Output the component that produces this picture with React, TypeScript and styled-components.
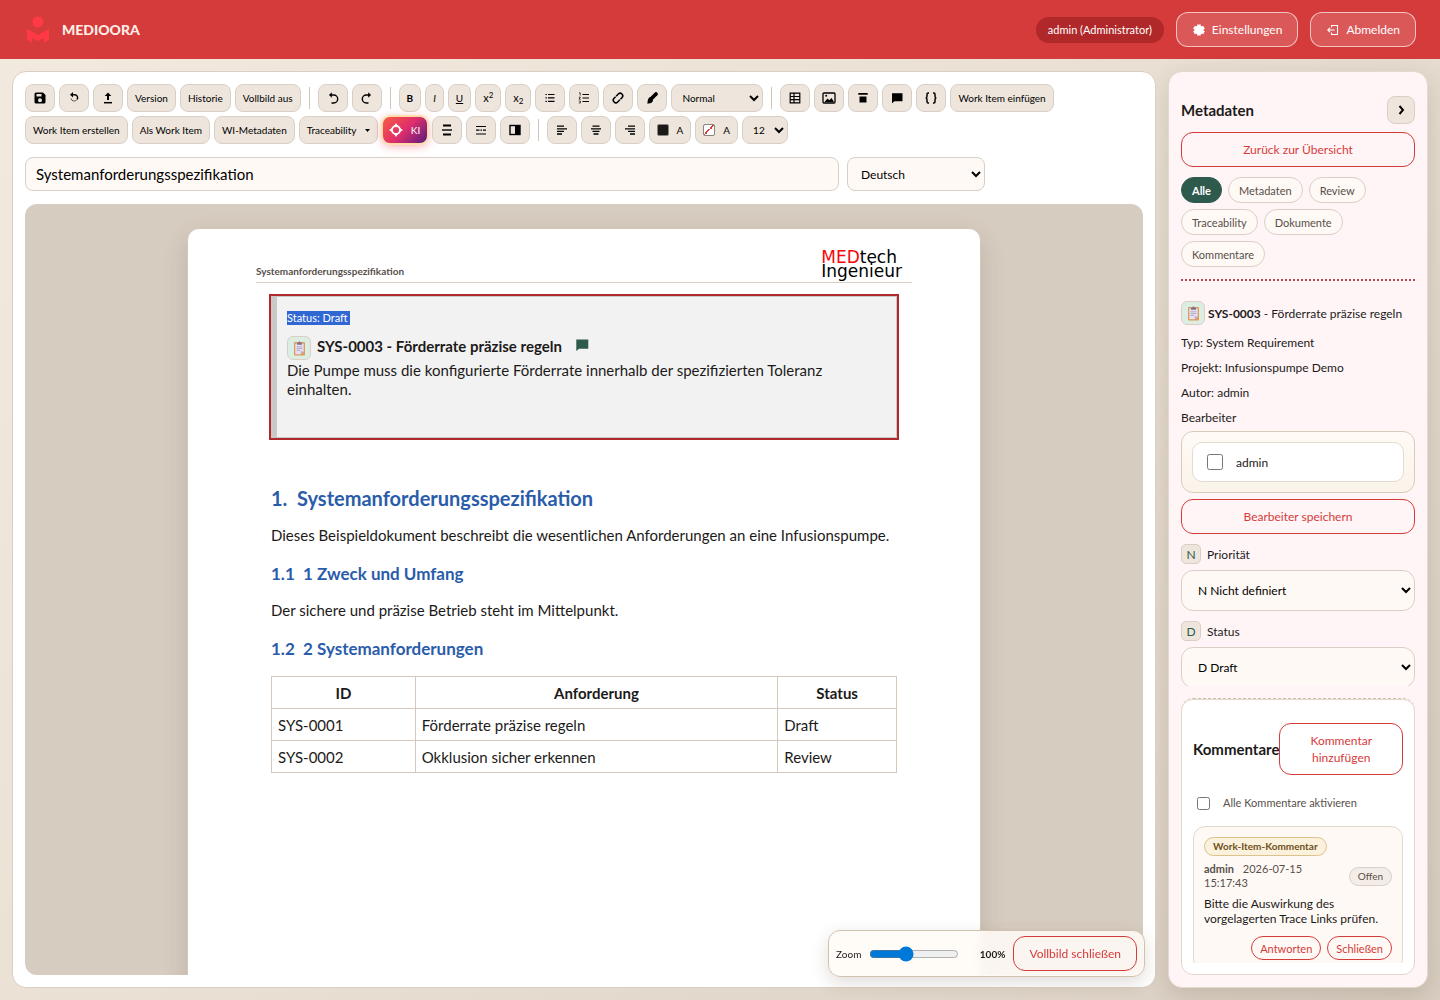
import React from "react";
import styled, { createGlobalStyle, css } from "styled-components";

const c = {
  red: "#d53b3b",
  redDark: "#b02829",
  green: "#2d5a4c",
  sand: "#eee6dd",
  line: "#d9cfc6",
  cream: "#fff9f5",
  canvas: "#d7ccc0",
  ink: "#1c1a19",
  muted: "#57504b",
  blue: "#2a5caa",
};

const Global = createGlobalStyle`
  *, *::before, *::after { box-sizing: border-box; }
  body {
    margin: 0;
    font-family: Lato, "Open Sans", sans-serif;
    font-size: 12px;
    color: ${c.ink};
    background: #e5dbcf;
  }
  button, input, select { font: inherit; color: inherit; }
  h1, h2, h3, p { margin: 0; }
`;

const Shell = styled.div`
  display: flex;
  flex-direction: column;
  height: 100vh;
  background: linear-gradient(135deg, #f3eadf 0%, #e9dfd3 50%, #d8cec1 100%);
`;

const TopBar = styled.header`
  display: flex;
  align-items: center;
  justify-content: space-between;
  padding: 12px 24px;
  background: ${c.red};
  color: #fff;
`;

const Brand = styled.div`
  display: flex;
  align-items: center;
  gap: 10px;
  font-size: 14px;
  font-weight: 900;
  color: #fdeee6;
`;

const TopActions = styled.div`
  display: flex;
  align-items: center;
  gap: 12px;
`;

const UserPill = styled.span`
  padding: 0 12px;
  border-radius: 13px;
  background: ${c.redDark};
  font-size: 11px;
  line-height: 26px;
`;

const GhostButton = styled.button`
  display: flex;
  align-items: center;
  gap: 6px;
  height: 35px;
  padding: 0 15px;
  border: 1px solid rgba(255, 255, 255, 0.65);
  border-radius: 12px;
  background: rgba(255, 255, 255, 0.15);
  font-size: 12px;
`;

const Workspace = styled.main`
  flex: 1;
  min-height: 0;
  display: grid;
  grid-template-columns: minmax(0, 1fr) 260px;
  gap: 12px;
  padding: 12px;
`;

const Editor = styled.section`
  position: relative;
  display: flex;
  flex-direction: column;
  min-height: 0;
  padding: 12px;
  border: 1px solid ${c.line};
  border-radius: 14px;
  background: #fff;
`;

const Toolbar = styled.div`
  display: flex;
  flex-wrap: wrap;
  gap: 4px;
`;

const toolBase = css`
  height: 28px;
  border: 1px solid ${c.line};
  border-radius: 8px;
  background: ${c.sand};
  color: #000;
  font-size: 10px;
`;

const Tool = styled.button<{ $icon?: boolean }>`
  ${toolBase}
  display: flex;
  align-items: center;
  justify-content: center;
  gap: 8px;
  padding: 0 7px;
  ${(p) => p.$icon && "width: 30px; padding: 0;"}
`;

const AiTool = styled(Tool)`
  width: 46px;
  padding: 0;
  border-color: #ffd9a0;
  background: linear-gradient(135deg, #f9603f 0%, #e02d6c 50%, #4e1a80 100%);
  background-origin: border-box;
  color: #fff;
  box-shadow: 0 0 0 1px #ffdfae, 0 2px 10px rgba(240, 60, 70, 0.45);
`;

const ToolSelect = styled.select<{ $wide?: boolean }>`
  ${toolBase}
  width: ${(p) => (p.$wide ? 92 : 46)}px;
  padding: 0 0 0 6px;
`;

const Divider = styled.span`
  width: 1px;
  height: 22px;
  margin: 3px 4px;
  background: #cfc5ba;
`;

const Swatch = styled.span<{ $none?: boolean }>`
  width: 12px;
  height: 12px;
  border: 1px solid #8c847c;
  border-radius: 2px;
  background: ${(p) =>
    p.$none
      ? "linear-gradient(135deg, #fff 45%, #d53b3b 45%, #d53b3b 55%, #fff 55%)"
      : "#1c1a19"};
`;

const TitleRow = styled.div`
  display: flex;
  gap: 8px;
  max-width: 960px;
  margin: 13px 0;
`;

const fieldBase = css`
  border: 1px solid ${c.line};
  border-radius: 8px;
  background: ${c.cream};
  color: #000;
`;

const TitleInput = styled.input`
  ${fieldBase}
  flex: 1;
  min-width: 0;
  height: 34px;
  padding: 0 10px;
  font-size: 15px;
`;

const LangSelect = styled.select`
  ${fieldBase}
  width: 138px;
  height: 34px;
  padding: 0 0 0 9px;
  font-size: 12px;
`;

const Canvas = styled.div`
  flex: 1;
  min-height: 0;
  overflow: hidden;
  padding: 24px;
  border-radius: 12px;
  background: ${c.canvas};
`;

const Sheet = styled.article`
  width: 794px;
  max-width: 100%;
  min-height: 1123px;
  margin: 0 auto;
  padding: 21px 68px;
  border: 1px solid #d2c6b8;
  border-radius: 12px;
  background: #fff;
  box-shadow: 0 8px 24px rgba(70, 50, 30, 0.16);
`;

const SheetHead = styled.div`
  display: flex;
  align-items: flex-end;
  justify-content: space-between;
  height: 33px;
  padding: 0 10px 4px 0;
  border-bottom: 1px solid ${c.line};
  font-size: 10px;
  font-weight: 700;
  line-height: 14px;
  color: ${c.muted};
`;

const LogoText = styled.span`
  display: flex;
  flex-direction: column;
  font-family: "DejaVu Sans", sans-serif;
  font-size: 17px;
  font-weight: 400;
  line-height: 14px;
  color: #000;
  em {
    font-style: normal;
    color: #f80808;
  }
`;

const SheetBody = styled.div`
  padding: 13px 15px;
  font-size: 15px;
`;

const WorkItem = styled.section`
  padding: 14px 24px 38px 10px;
  border: 1px solid #c9c9c9;
  border-left-width: 6px;
  outline: 2px solid ${c.redDark};
  background: #f2f2f2;
`;

const Selected = styled.span`
  display: block;
  width: fit-content;
  padding-right: 2px;
  background: #3067d3;
  color: #fff;
  font-size: 11px;
  line-height: 14px;
`;

const WorkItemTitle = styled.div`
  display: flex;
  gap: 6px;
  margin-top: 11px;
  font-weight: 700;
  line-height: 20px;
  > svg {
    margin: 1px 0 0 6px;
  }
`;

const Tile = styled.span`
  display: inline-flex;
  align-items: center;
  justify-content: center;
  width: 24px;
  height: 24px;
  border: 1px solid ${c.line};
  border-radius: 6px;
  background: #dceee2;
`;

const WorkItemText = styled.p`
  margin-top: 1px;
  line-height: 19px;
`;

const H1 = styled.h1`
  margin-top: 48px;
  font-size: 20px;
  line-height: 24px;
  color: ${c.blue};
  white-space: pre-wrap;
`;

const H2 = styled.h2`
  margin-top: 18px;
  font-size: 17px;
  line-height: 22px;
  color: ${c.blue};
  white-space: pre-wrap;
`;

const Para = styled.p`
  margin-top: 15px;
  line-height: 20px;
`;

const DataTable = styled.table`
  width: 100%;
  margin-top: 16px;
  table-layout: fixed;
  border-collapse: collapse;
  th,
  td {
    height: 32px;
    padding: 0 6px;
    border: 1px solid #d6c8ba;
    text-align: left;
  }
  th {
    text-align: center;
  }
  th:first-child {
    width: 23%;
  }
  th:last-child {
    width: 19%;
  }
`;

const ZoomBar = styled.div`
  position: absolute;
  right: 10px;
  bottom: 10px;
  display: flex;
  align-items: center;
  gap: 8px;
  padding: 5px 7px;
  border: 1px solid #d2c1ae;
  border-radius: 12px;
  background: rgba(255, 250, 246, 0.88);
  backdrop-filter: blur(6px);
  box-shadow: 0 6px 18px rgba(70, 50, 30, 0.16);
  font-size: 10px;
  input {
    width: 90px;
    margin: 0;
    accent-color: #0078d7;
  }
  output {
    width: 38px;
    text-align: right;
    font-weight: 700;
  }
`;

const OutlineButton = styled.button<{ $size?: "small" | "tall" }>`
  height: 35px;
  padding: 0 15px;
  border: 1px solid ${c.red};
  border-radius: 12px;
  background: transparent;
  color: ${c.red};
  font-size: 12px;
  ${(p) =>
    p.$size === "small" &&
    "height: 24px; padding: 0 8px; font-size: 11px;"}
  ${(p) =>
    p.$size === "tall" &&
    "flex: 1; height: 52px; line-height: 17px;"}
`;

const Sidebar = styled.aside`
  display: flex;
  flex-direction: column;
  min-height: 0;
  padding: 12px;
  border: 1px solid #e3d9ce;
  border-radius: 14px;
  background: #fff5f6;
  box-shadow: 0 8px 24px rgba(70, 50, 30, 0.16);
`;

const SideHead = styled.div`
  display: flex;
  align-items: center;
  justify-content: space-between;
  margin: 12px 0 8px;
  h2 {
    font-size: 15px;
  }
`;

const CollapseButton = styled.button`
  ${toolBase}
  display: grid;
  place-items: center;
  width: 28px;
  padding: 0;
`;

const Chips = styled.div`
  display: flex;
  flex-wrap: wrap;
  gap: 6px;
  margin-top: 10px;
  padding-bottom: 12px;
  border-bottom: 2px dotted #b54b50;
`;

const Chip = styled.button<{ $active?: boolean }>`
  height: 26px;
  padding: 0 10px;
  border: 1px solid ${(p) => (p.$active ? c.green : c.line)};
  border-radius: 13px;
  background: ${(p) => (p.$active ? c.green : c.cream)};
  color: ${(p) => (p.$active ? "#fff" : c.muted)};
  font-size: 11px;
  font-weight: ${(p) => (p.$active ? 700 : 400)};
`;

const SideScroll = styled.div`
  flex: 1;
  min-height: 0;
  overflow: hidden;
  display: flex;
  flex-direction: column;
  padding-top: 20px;
  > * {
    flex-shrink: 0;
  }
`;

const ItemLine = styled.p`
  display: flex;
  align-items: center;
  gap: 3px;
  margin-bottom: 5px;
  font-size: 12px;
`;

const Fact = styled.p`
  font-size: 12px;
  line-height: 25px;
`;

const Assignees = styled.div`
  margin: 1px 0 6px;
  padding: 10px;
  border: 1px solid #d8ccbb;
  border-radius: 12px;
  background: linear-gradient(#fffaf5, #faf3e9);
`;

const Assignee = styled.label`
  display: flex;
  align-items: center;
  gap: 13px;
  height: 40px;
  padding: 0 14px;
  border: 1px solid #e4dbd0;
  border-radius: 10px;
  background: #fff;
  input {
    width: 16px;
    height: 16px;
    margin: 0;
  }
`;

const FieldLabel = styled.label`
  display: flex;
  align-items: center;
  gap: 6px;
  margin: 10px 0 6px;
  font-size: 12px;
`;

const Letter = styled.span`
  display: grid;
  place-items: center;
  width: 20px;
  height: 20px;
  border: 1px solid ${c.line};
  border-radius: 5px;
  background: ${c.sand};
  color: ${c.green};
  font-size: 12px;
`;

const SideSelect = styled.select`
  ${fieldBase}
  width: 100%;
  height: 41px;
  padding: 0 0 0 12px;
  border-radius: 12px;
  font-size: 12px;
`;

const CommentsFrame = styled.div`
  flex: none;
  margin-top: 12px;
  border-top: 1px dashed #cdbfae;
  border-radius: 12px;
`;

const Comments = styled.section`
  height: 276px;
  padding: 0 11px 11px;
  border: 1px solid #e3d8cc;
  border-radius: 12px;
  background: #fff;
`;

const CommentsClip = styled.div`
  height: 100%;
  overflow: hidden;
`;

const CommentsHead = styled.div`
  display: flex;
  align-items: center;
  margin-top: 23px;
  h3 {
    flex: none;
    font-size: 15px;
  }
`;

const CheckLine = styled.label`
  display: flex;
  align-items: center;
  gap: 13px;
  margin: 20px 4px 15px;
  font-size: 11px;
  line-height: 16px;
  color: ${c.muted};
  input {
    width: 13px;
    height: 13px;
    margin: 0;
  }
`;

const CommentCard = styled.article`
  padding: 10px;
  border: 1px solid #e3d8cc;
  border-radius: 12px;
  background: ${c.cream};
`;

const Badge = styled.span<{ $gold?: boolean }>`
  display: inline-block;
  flex: none;
  padding: 0 8px;
  border: 1px solid ${(p) => (p.$gold ? "#dcc28c" : c.line)};
  border-radius: 10px;
  background: ${(p) => (p.$gold ? "#fbf1dc" : "#f4ece6")};
  color: ${(p) => (p.$gold ? "#6e5021" : c.muted)};
  font-size: 10px;
  font-weight: ${(p) => (p.$gold ? 700 : 400)};
  line-height: 17px;
`;

const CommentMeta = styled.div`
  display: flex;
  align-items: center;
  justify-content: space-between;
  margin-top: 6px;
  font-size: 11px;
  line-height: 14px;
  color: ${c.muted};
  p {
    width: 110px;
  }
  strong {
    margin-right: 6px;
  }
`;

const CommentText = styled.p`
  margin: 6px 0 10px;
  font-size: 12px;
  line-height: 15px;
`;

const CommentActions = styled.div`
  display: flex;
  justify-content: flex-end;
  gap: 6px;
`;

const icons: Record<string, React.ReactNode> = {
  save: (
    <path
      fill="currentColor"
      stroke="none"
      fillRule="evenodd"
      d="M3 1.500h7L12.500 4v7a1.500 1.500 0 0 1-1.500 1.500H3A1.500 1.500 0 0 1 1.500 11V3A1.500 1.500 0 0 1 3 1.500zM3.500 3v2.500h5V3zM7 7.200a2 2 0 1 0 0 4 2 2 0 0 0 0-4z"
    />
  ),
  revert: (
    <>
      <path d="M5 3.700h2.500a3 3 0 0 1 2.600 4.700" strokeWidth="1.500" />
      <path d="M10.100 8.400A3.300 3.300 0 0 1 4 7.500" strokeWidth="1" opacity=".6" />
      <path d="M6 1v5.400L3 3.700z" fill="currentColor" stroke="none" />
    </>
  ),
  upload: (
    <>
      <path d="M7 1.500l3.300 3.500H8v4H6V5H3.700z" fill="currentColor" stroke="none" />
      <path d="M3 11.700h8" strokeWidth="1.500" />
    </>
  ),
  undo: (
    <>
      <path d="M4 4h3.700a4 4 0 0 1 0 8H5.500" strokeWidth="1.400" />
      <path d="M5.800 1.200v5.600L3 4z" fill="currentColor" stroke="none" />
    </>
  ),
  redo: (
    <>
      <path d="M10 4H6.300a4 4 0 0 0 0 8h2.200" strokeWidth="1.400" />
      <path d="M8.200 1.200v5.600L11 4z" fill="currentColor" stroke="none" />
    </>
  ),
  bullets: (
    <path d="M5 3.500h6.500M5 6.900h6.500M5 10.300h6.500M2.500 3.500h1.400M2.500 6.900h1.400M2.500 10.300h1.400" strokeWidth="1.200" />
  ),
  numbers: (
    <>
      <path d="M5.500 3.500h6.500M5.500 7h6.500M5.500 10.500h6.500" strokeWidth="1.200" />
      <path d="M2 1.800h1.200v2.700M1.800 6.200h1.600L2 8.200h1.600M1.800 10h1.600v2H1.800" strokeWidth=".7" />
    </>
  ),
  link: (
    <g transform="rotate(-45 7 7)">
      <path d="M6.300 4.400H4a2.600 2.600 0 0 0 0 5.200h3M7 4.400h3a2.600 2.600 0 0 1 0 5.200H7.800" strokeWidth="1.500" />
    </g>
  ),
  brush: (
    <>
      <path d="M11 3L6.500 7.500" strokeWidth="3.800" strokeLinecap="round" />
      <path d="M5.200 6l2.800 2.800c.2 2.400-2 4.100-6 3.700 1-1 .3-2 .9-3.500.4-1.500 1.300-2.700 2.300-3z" fill="currentColor" stroke="none" />
    </>
  ),
  table: <path d="M2.200 2.200h9.600v9.600H2.200zM2.200 5.500h9.600M2.200 8.600h9.600M6 2.200v9.600" strokeWidth="1.200" />,
  image: (
    <>
      <rect x="1" y="2" width="12" height="10" rx="1" strokeWidth="1.300" />
      <path d="M2.500 11l3-3.500 1.800 1.700L9.500 7l2.500 4z" fill="currentColor" stroke="none" />
      <circle cx="4.200" cy="4.800" r="1" fill="currentColor" stroke="none" />
    </>
  ),
  header: (
    <path d="M2.300 2h9.400v1.800H2.300zM3.500 5.500h7v6h-7z" fill="currentColor" stroke="none" />
  ),
  comment: <path d="M2 2.200h10.500v8H4.500L2 12.300z" fill="currentColor" stroke="none" />,
  braces: (
    <path
      d="M5 2H4.200Q3 2 3 3.300v2Q3 7 1.600 7 3 7 3 8.700v2Q3 12 4.200 12H5M9 2h.8Q11 2 11 3.300v2Q11 7 12.400 7 11 7 11 8.700v2Q11 12 9.800 12H9"
      strokeWidth="1.500"
    />
  ),
  spacing: (
    <>
      <path d="M3 2.500h8M3 11.500h8" strokeWidth="1.900" />
      <path d="M2 7h10" strokeWidth="1.400" />
    </>
  ),
  pagebreak: <path d="M2 3.500h10M2 11h10M2 7.200h3.500M6.500 7.200H8M9 7.200h3" strokeWidth="1.200" />,
  contrast: (
    <>
      <rect x="2" y="2.500" width="10" height="9" strokeWidth="1.400" />
      <path d="M7 2.500h5v9H7z" fill="currentColor" stroke="none" />
    </>
  ),
  left: <path d="M2 3.200h7M2 5.800h10M2 8.400h7M2 11h5" strokeWidth="1.300" />,
  center: <path d="M3.500 3.200h7M2 5.800h10M3.500 8.400h7M4.500 11h5" strokeWidth="1.300" />,
  right: <path d="M5 3.200h7M2 5.800h10M5 8.400h7M7 11h5" strokeWidth="1.300" />,
  target: (
    <>
      <circle cx="7" cy="7" r="4" strokeWidth="1.800" />
      <path d="M7 0l2 3.200H5zM7 14l2-3.200H5zM0 7l3.200-2v4zM14 7l-3.200-2v4z" fill="currentColor" stroke="none" />
    </>
  ),
  gear: (
    <>
      <circle cx="7" cy="7" r="4.500" fill="currentColor" stroke="none" />
      <path d="M7 1.500v11M2 4.200l10 5.600M2 9.800l10-5.600" strokeWidth="3.600" />
    </>
  ),
  logout: (
    <path d="M5.500 4.500V2.500h6v9h-6v-2M8.500 7H2M4 4.800L1.800 7 4 9.200" strokeWidth="1.100" />
  ),
  chevron: <path d="M5.500 3l3.500 4-3.500 4" strokeWidth="1.900" />,
};

const Icon = ({ name, size = 14, color }: { name: string; size?: number; color?: string }) => (
  <svg width={size} height={size} viewBox="0 0 14 14" fill="none" stroke="currentColor" color={color} aria-hidden="true">
    {icons[name]}
  </svg>
);

const Clipboard = () => (
  <svg width="13" height="15" viewBox="0 0 13 15" aria-hidden="true">
    <rect x="1" y="1" width="11" height="13.500" rx="1" fill="#e0995f" />
    <path d="M2.300 2.500h8.400v7.800l-3 3H2.300z" fill="#e6e0f2" />
    <path d="M10.700 10.300l-3 3v-3z" fill="#b9b0cf" />
    <path d="M4 1.800h1.300a1.200 1.200 0 0 1 2.400 0H9v2H4z" fill="#7d7686" />
    <path d="M3.600 5.800h5.800M3.600 7.600h5.800M3.600 9.400h3.500" stroke="#a79dbb" strokeWidth=".8" />
  </svg>
);

const BrandMark = () => (
  <svg width="28" height="28" viewBox="0 0 28 28" fill="#ff3945" aria-hidden="true">
    <circle cx="14" cy="6" r="5.500" />
    <path d="M3 13l11 6L25 13v11l-5 3v-5l-6 3-6-3v5l-5-3z" />
  </svg>
);

const IconTool = ({ name, label }: { name: string; label: string }) => (
  <Tool $icon aria-label={label}>
    <Icon name={name} />
  </Tool>
);

const Script = styled.span<{ $up?: boolean }>`
  display: flex;
  align-items: ${(p) => (p.$up ? "flex-start" : "flex-end")};
  font-size: 11px;
  line-height: 14px;
  small {
    font-size: 8px;
    line-height: 8px;
  }
`;

const rows = [
  ["SYS-0001", "Förderrate präzise regeln", "Draft"],
  ["SYS-0002", "Okklusion sicher erkennen", "Review"],
];

const filters = ["Alle", "Metadaten", "Review", "Traceability", "Dokumente", "Kommentare"];

export default function App() {
  return (
    <Shell>
      <Global />
      <TopBar>
        <Brand>
          <BrandMark />
          <span>MEDIOORA</span>
        </Brand>
        <TopActions>
          <UserPill>admin (Administrator)</UserPill>
          <GhostButton>
            <Icon name="gear" />
            Einstellungen
          </GhostButton>
          <GhostButton>
            <Icon name="logout" />
            Abmelden
          </GhostButton>
        </TopActions>
      </TopBar>
      <Workspace>
        <Editor>
          <Toolbar>
            <IconTool name="save" label="Speichern" />
            <IconTool name="revert" label="Zurücksetzen" />
            <IconTool name="upload" label="Hochladen" />
            <Tool>Version</Tool>
            <Tool>Historie</Tool>
            <Tool>Vollbild aus</Tool>
            <Divider />
            <IconTool name="undo" label="Rückgängig" />
            <IconTool name="redo" label="Wiederholen" />
            <Divider />
            <Tool><b>B</b></Tool>
            <Tool><i>I</i></Tool>
            <Tool><u>U</u></Tool>
            <Tool><Script $up>x<small>2</small></Script></Tool>
            <Tool><Script>x<small>2</small></Script></Tool>
            <IconTool name="bullets" label="Aufzählung" />
            <IconTool name="numbers" label="Nummerierung" />
            <IconTool name="link" label="Link" />
            <IconTool name="brush" label="Format übertragen" />
            <ToolSelect $wide aria-label="Absatzformat">
              <option>Normal</option>
            </ToolSelect>
            <Divider />
            <IconTool name="table" label="Tabelle" />
            <IconTool name="image" label="Bild" />
            <IconTool name="header" label="Kopfzeile" />
            <IconTool name="comment" label="Kommentar" />
            <IconTool name="braces" label="Platzhalter" />
            <Tool>Work Item einfügen</Tool>
            <Tool>Work Item erstellen</Tool>
            <Tool>Als Work Item</Tool>
            <Tool>WI-Metadaten</Tool>
            <Tool>
              Traceability
              <svg width="5" height="3" viewBox="0 0 5 3" aria-hidden="true">
                <path d="M0 0h5L2.500 3z" />
              </svg>
            </Tool>
            <AiTool>
              <Icon name="target" />
              KI
            </AiTool>
            <IconTool name="spacing" label="Zeilenabstand" />
            <IconTool name="pagebreak" label="Seitenumbruch" />
            <IconTool name="contrast" label="Kontrast" />
            <Divider />
            <IconTool name="left" label="Linksbündig" />
            <IconTool name="center" label="Zentriert" />
            <IconTool name="right" label="Rechtsbündig" />
            <Tool><Swatch />A</Tool>
            <Tool><Swatch $none />A</Tool>
            <ToolSelect aria-label="Schriftgröße">
              <option>12</option>
            </ToolSelect>
          </Toolbar>
          <TitleRow>
            <TitleInput aria-label="Titel" defaultValue="Systemanforderungsspezifikation" />
            <LangSelect aria-label="Sprache">
              <option>Deutsch</option>
            </LangSelect>
          </TitleRow>
          <Canvas>
            <Sheet>
              <SheetHead>
                <span>Systemanforderungsspezifikation</span>
                <LogoText>
                  <span><em>MED</em>tech</span>
                  <span>Ingenieur</span>
                </LogoText>
              </SheetHead>
              <SheetBody>
                <WorkItem>
                  <Selected>Status: Draft</Selected>
                  <WorkItemTitle>
                    <Tile><Clipboard /></Tile>
                    <span>SYS-0003 - Förderrate präzise regeln</span>
                    <Icon name="comment" size={16} color={c.green} />
                  </WorkItemTitle>
                  <WorkItemText>
                    Die Pumpe muss die konfigurierte Förderrate innerhalb der spezifizierten Toleranz einhalten.
                  </WorkItemText>
                </WorkItem>
                <H1>{"1.  Systemanforderungsspezifikation"}</H1>
                <Para>Dieses Beispieldokument beschreibt die wesentlichen Anforderungen an eine Infusionspumpe.</Para>
                <H2>{"1.1  1 Zweck und Umfang"}</H2>
                <Para>Der sichere und präzise Betrieb steht im Mittelpunkt.</Para>
                <H2>{"1.2  2 Systemanforderungen"}</H2>
                <DataTable>
                  <thead>
                    <tr>
                      <th>ID</th>
                      <th>Anforderung</th>
                      <th>Status</th>
                    </tr>
                  </thead>
                  <tbody>
                    {rows.map((row) => (
                      <tr key={row[0]}>
                        {row.map((cell) => (
                          <td key={cell}>{cell}</td>
                        ))}
                      </tr>
                    ))}
                  </tbody>
                </DataTable>
              </SheetBody>
            </Sheet>
          </Canvas>
          <ZoomBar>
            <label htmlFor="zoom">Zoom</label>
            <input id="zoom" type="range" min={50} max={180} defaultValue={100} />
            <output htmlFor="zoom">100%</output>
            <OutlineButton>Vollbild schließen</OutlineButton>
          </ZoomBar>
        </Editor>
        <Sidebar>
          <SideHead>
            <h2>Metadaten</h2>
            <CollapseButton aria-label="Einklappen">
              <Icon name="chevron" />
            </CollapseButton>
          </SideHead>
          <OutlineButton>Zurück zur Übersicht</OutlineButton>
          <Chips>
            {filters.map((f, i) => (
              <Chip key={f} $active={i === 0}>{f}</Chip>
            ))}
          </Chips>
          <SideScroll>
            <ItemLine>
              <Tile><Clipboard /></Tile>
              <span><b>SYS-0003</b> - Förderrate präzise regeln</span>
            </ItemLine>
            <Fact>Typ: System Requirement</Fact>
            <Fact>Projekt: Infusionspumpe Demo</Fact>
            <Fact>Autor: admin</Fact>
            <Fact>Bearbeiter</Fact>
            <Assignees>
              <Assignee>
                <input type="checkbox" />
                admin
              </Assignee>
            </Assignees>
            <OutlineButton>Bearbeiter speichern</OutlineButton>
            <FieldLabel htmlFor="prio"><Letter>N</Letter>Priorität</FieldLabel>
            <SideSelect id="prio">
              <option>N Nicht definiert</option>
            </SideSelect>
            <FieldLabel htmlFor="status"><Letter>D</Letter>Status</FieldLabel>
            <SideSelect id="status">
              <option>D Draft</option>
            </SideSelect>
          </SideScroll>
          <CommentsFrame>
            <Comments>
              <CommentsClip>
                <CommentsHead>
                  <h3>Kommentare</h3>
                  <OutlineButton $size="tall">Kommentar hinzufügen</OutlineButton>
                </CommentsHead>
                <CheckLine>
                  <input type="checkbox" />
                  Alle Kommentare aktivieren
                </CheckLine>
                <CommentCard>
                  <Badge $gold>Work-Item-Kommentar</Badge>
                  <CommentMeta>
                    <p><strong>admin</strong> 2026-07-15 15:17:43</p>
                    <Badge>Offen</Badge>
                  </CommentMeta>
                  <CommentText>Bitte die Auswirkung des vorgelagerten Trace Links prüfen.</CommentText>
                  <CommentActions>
                    <OutlineButton $size="small">Antworten</OutlineButton>
                    <OutlineButton $size="small">Schließen</OutlineButton>
                  </CommentActions>
                </CommentCard>
              </CommentsClip>
            </Comments>
          </CommentsFrame>
        </Sidebar>
      </Workspace>
    </Shell>
  );
}
